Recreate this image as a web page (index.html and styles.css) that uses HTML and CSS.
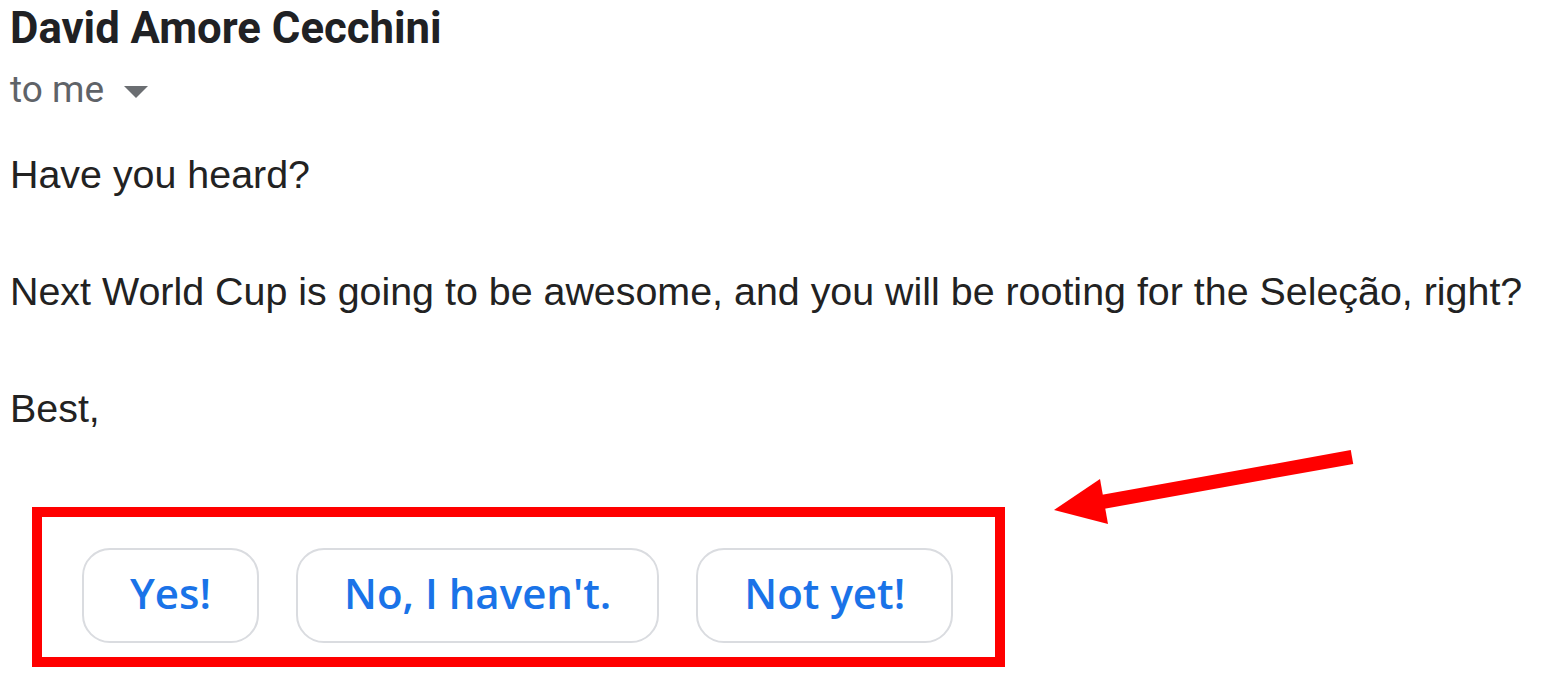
FILE: index.html
```html
<!DOCTYPE html>
<html lang="en">
<head>
<meta charset="utf-8">
<title>Email</title>
<link rel="stylesheet" href="styles.css">
</head>
<body>
<div class="mail">
  <div class="sender">David Amore Cecchini</div>
  <div class="recipient">to me <span class="caret"></span></div>
  <div class="body">
    <p>Have you heard?</p>
    <p>Next World Cup is going to be awesome, and you will be rooting for the Seleção, right?</p>
    <p>Best,</p>
  </div>
  <div class="replies-wrap">
    <div class="replies">
      <button class="chip">Yes!</button>
      <button class="chip">No, I haven't.</button>
      <button class="chip">Not yet!</button>
    </div>
    <svg class="arrow" width="330" height="90" viewBox="0 0 330 90">
      <line x1="312" y1="10" x2="62" y2="55" stroke="#ff0000" stroke-width="14"/>
      <polygon points="14,63 60,32 68,77" fill="#ff0000"/>
    </svg>
  </div>
</div>
</body>
</html>
```
FILE: styles.css
```css
html, body {
  margin: 0;
  padding: 0;
  background: #ffffff;
}
.mail {
  padding: 0 0 0 10px;
  position: relative;
}
.sender {
  font-family: Roboto, "Liberation Sans", sans-serif;
  font-weight: 700;
  font-size: 43.7px;
  color: #202124;
  line-height: 56px;
  margin-top: 0;
}
.recipient {
  font-family: Roboto, "Liberation Sans", sans-serif;
  font-size: 37px;
  color: #5f6368;
  line-height: 56px;
  margin-top: 6px;
  display: flex;
  align-items: center;
}
.caret {
  display: inline-block;
  width: 0;
  height: 0;
  border-left: 12px solid transparent;
  border-right: 12px solid transparent;
  border-top: 12px solid #6b6e72;
  margin-left: 20px;
  margin-top: 4px;
}
.body {
  font-family: "Liberation Sans", Arial, sans-serif;
  font-size: 39.4px;
  color: #222222;
  margin-top: 27px;
}
.body p {
  margin: 0 0 58px 0;
  line-height: 59px;
}
.replies-wrap {
  position: relative;
}
.replies {
  display: inline-flex;
  gap: 37px;
  border: 10px solid #ff0000;
  padding: 31px 42px 14px 40px;
  margin-left: 22px;
  margin-top: 11px;
}
.chip {
  font-family: "Open Sans", Lato, sans-serif;
  font-weight: 600;
  font-size: 42px;
  color: #1a73e8;
  background: #ffffff;
  border: 2px solid #dadce0;
  border-radius: 28px;
  height: 95px;
  padding: 0 46px 6px;
}
.arrow {
  position: absolute;
  left: 1030px;
  top: -49px;
}
```
